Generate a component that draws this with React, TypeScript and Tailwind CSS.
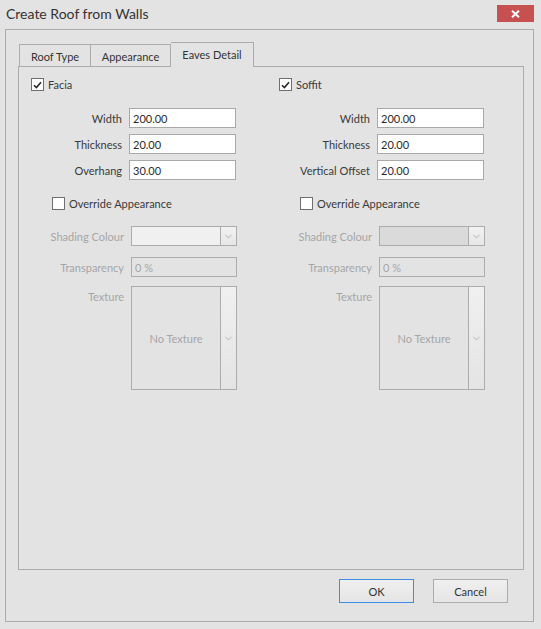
import React from "react";

const FONT = "font-['Segoe_UI',Lato,sans-serif]";

function Check({ checked }: { checked?: boolean }) {
  return (
    <span className="w-[13px] h-[13px] border border-[#6f6f6f] bg-white flex items-center justify-center shrink-0">
      {checked && (
        <svg width="9" height="8" viewBox="0 0 9 8">
          <path d="M1 4.2 L3.4 6.6 L8 1.2" fill="none" stroke="#262626" strokeWidth="1.6" />
        </svg>
      )}
    </span>
  );
}

function Chevron() {
  return (
    <svg width="7" height="5" viewBox="0 0 7 5">
      <path d="M0.5 0.8 L3.5 3.8 L6.5 0.8" fill="none" stroke="#c4c4c4" strokeWidth="1.1" />
    </svg>
  );
}

function Field({ label, value }: { label: string; value: string }) {
  return (
    <div className="flex items-center h-[20px]">
      <span className="w-[91px] text-right text-[#3a3a3a]">{label}</span>
      <div className="ml-[7px] w-[107px] h-[20px] border border-[#a9a9a9] bg-white pl-[3px] flex items-center text-[#2a2a2a]">
        {value}
      </div>
    </div>
  );
}

function Column({ title, fields, comboBg }: { title: string; fields: [string, string][]; comboBg: string }) {
  return (
    <div className="flex flex-col">
      <div className="flex items-center h-[13px] gap-[4px]">
        <Check checked />
        <span className="text-[#3a3a3a]">{title}</span>
      </div>
      <div className="mt-[17px] flex flex-col gap-[6px]">
        {fields.map(([l, v]) => (
          <Field key={l} label={l} value={v} />
        ))}
      </div>

      <div className="mt-[17px] ml-[21px] flex items-center h-[13px] gap-[4px]">
        <Check />
        <span className="text-[#3a3a3a]">Override Appearance</span>
      </div>

      <div className="mt-[16px] flex items-center h-[20px] text-[#a6a6a6]">
        <span className="w-[93px] text-right">Shading Colour</span>
        <div className={`ml-[7px] w-[106px] h-[20px] border border-[#acacac] flex ${comboBg}`}>
          <div className="flex-1" />
          <div className="w-[16px] border-l border-[#acacac] bg-gradient-to-b from-[#f2f2f2] to-[#e6e6e6] flex items-center justify-center">
            <Chevron />
          </div>
        </div>
      </div>

      <div className="mt-[11px] flex items-center h-[20px] text-[#a6a6a6]">
        <span className="w-[93px] text-right">Transparency</span>
        <div className="ml-[7px] w-[106px] h-[20px] border border-[#acacac] pl-[3px] flex items-center">0 %</div>
      </div>

      <div className="mt-[9px] flex text-[#a6a6a6]">
        <span className="w-[93px] text-right pt-[5px]">Texture</span>
        <div className="ml-[7px] w-[106px] h-[104px] border border-[#acacac] flex">
          <div className="flex-1 flex items-center justify-center">No Texture</div>
          <div className="w-[16px] border-l border-[#acacac] bg-gradient-to-b from-[#f0f0f0] to-[#e4e4e4] flex items-center justify-center">
            <Chevron />
          </div>
        </div>
      </div>
    </div>
  );
}

export default function App() {
  return (
    <div className={`w-[541px] h-[629px] bg-[#e3e3e3] ${FONT} text-[11px] leading-none flex flex-col`}>
      {/* Title bar */}
      <div className="h-[29px] flex items-start">
        <div className="pl-[6px] pt-[7px] text-[14px] text-[#333]">Create Roof from Walls</div>
        <div className="ml-auto mr-[7px] mt-[5px] w-[37px] h-[17px] bg-[#c75050] flex items-center justify-center">
          <svg width="9" height="8" viewBox="0 0 9 8">
            <path d="M1 0.8 L8 7.2 M8 0.8 L1 7.2" stroke="#fff" strokeWidth="2" />
          </svg>
        </div>
      </div>

      {/* Frame */}
      <div className="ml-[5px] w-[529px] h-[593px] border border-[#acacac] flex flex-col">
        <div className="ml-[12px] mt-[12px] w-[506px] flex flex-col">
          {/* Tabs */}
          <div className="flex items-end h-[24px] pl-px">
            <div className="w-[72px] h-[22px] border-l border-t border-r border-[#acacac] flex items-center justify-center pt-[2px] text-[#333]">
              Roof Type
            </div>
            <div className="w-[80px] h-[22px] border-t border-r border-[#acacac] flex items-center justify-center pt-[2px] text-[#333]">
              Appearance
            </div>
            <div className="relative z-10 -mb-px w-[83px] h-[25px] border-t border-r border-[#acacac] bg-[#e3e3e3] flex items-center justify-center pb-[2px] text-[#333]">
              Eaves Detail
            </div>
          </div>
          {/* Panel */}
          <div className="h-[504px] border border-[#acacac] pl-[12px] pt-[11px] grid grid-cols-[248px_1fr]">
            <Column
              title="Facia"
              comboBg="bg-[#f0f0f0]"
              fields={[
                ["Width", "200.00"],
                ["Thickness", "20.00"],
                ["Overhang", "30.00"],
              ]}
            />
            <Column
              title="Soffit"
              comboBg="bg-[#dadada]"
              fields={[
                ["Width", "200.00"],
                ["Thickness", "20.00"],
                ["Vertical Offset", "20.00"],
              ]}
            />
          </div>
        </div>

        {/* Buttons */}
        <div className="mt-[9px] mr-[25px] flex justify-end gap-[19px]">
          <button className="w-[75px] h-[24px] border border-[#3c8ee6] bg-gradient-to-b from-[#f0f0f0] to-[#e5e5e5] text-[#333]">
            OK
          </button>
          <button className="w-[75px] h-[24px] border border-[#acacac] bg-gradient-to-b from-[#f0f0f0] to-[#e5e5e5] text-[#333]">
            Cancel
          </button>
        </div>
      </div>
    </div>
  );
}
